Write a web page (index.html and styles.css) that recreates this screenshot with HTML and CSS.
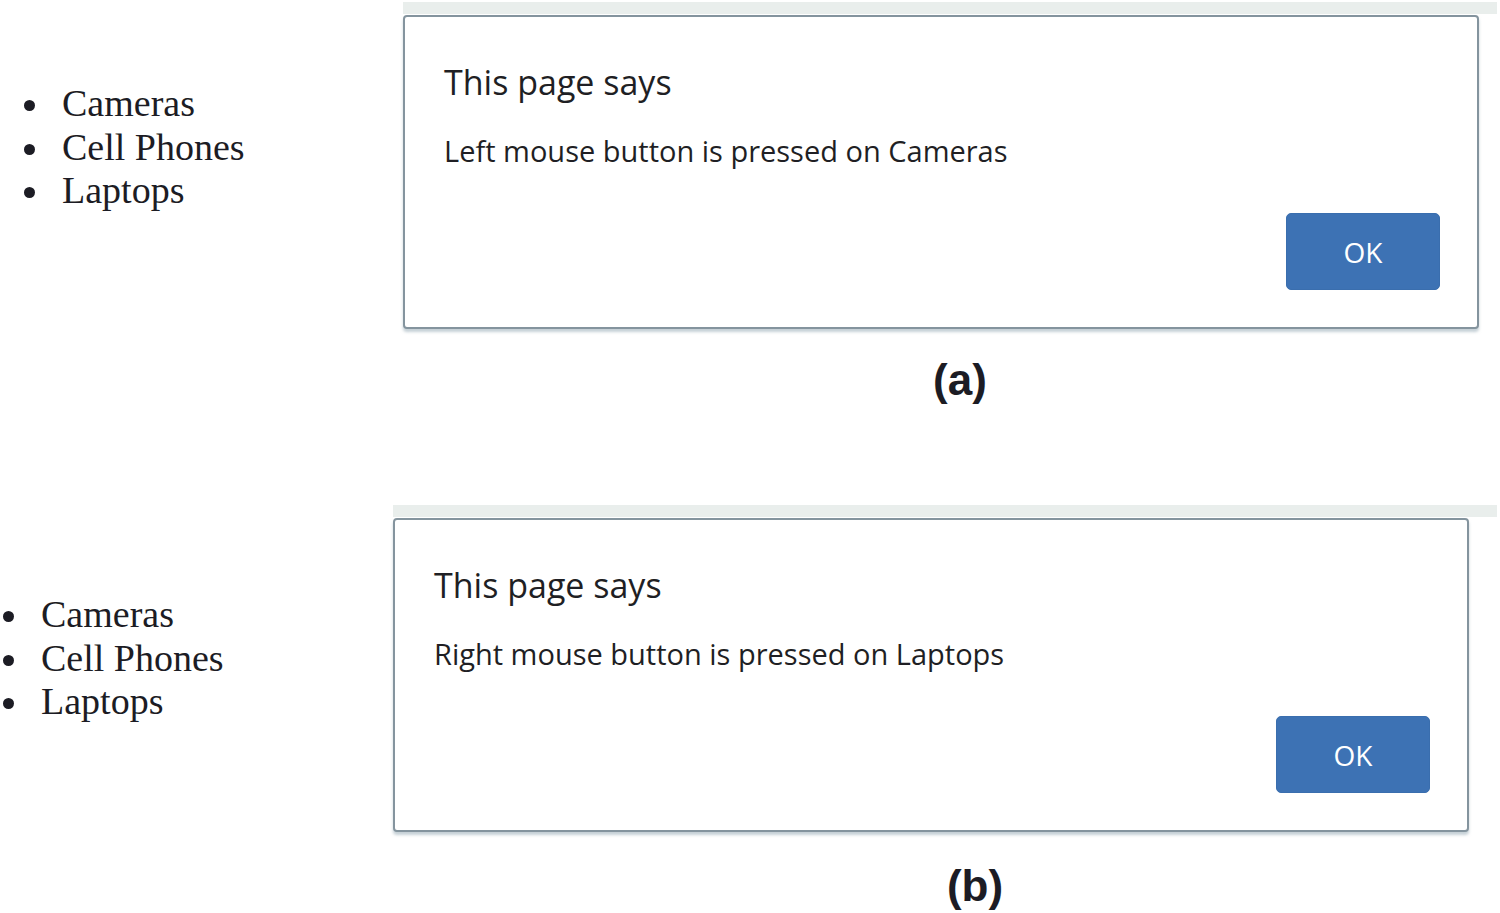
FILE: index.html
```html
<!DOCTYPE html>
<html>
<head>
<meta charset="utf-8">
<link rel="stylesheet" href="styles.css">
</head>
<body>
<section class="panel panel-a">
  <ul class="items">
    <li>Cameras</li>
    <li>Cell Phones</li>
    <li>Laptops</li>
  </ul>
  <div class="dialog-col">
    <div class="strip"></div>
    <div class="dialog">
      <div class="title">This page says</div>
      <div class="message">Left mouse button is pressed on Cameras</div>
      <div class="actions"><button class="ok">OK</button></div>
    </div>
    <div class="caption">(a)</div>
  </div>
</section>
<section class="panel panel-b">
  <ul class="items">
    <li>Cameras</li>
    <li>Cell Phones</li>
    <li>Laptops</li>
  </ul>
  <div class="dialog-col">
    <div class="strip"></div>
    <div class="dialog">
      <div class="title">This page says</div>
      <div class="message">Right mouse button is pressed on Laptops</div>
      <div class="actions"><button class="ok">OK</button></div>
    </div>
    <div class="caption">(b)</div>
  </div>
</section>
</body>
</html>
```
FILE: styles.css
```css
html, body {
  margin: 0;
  padding: 0;
  background: #ffffff;
  width: 1500px;
  height: 913px;
  overflow: hidden;
}

.panel {
  display: flex;
}

.panel-a {
  height: 503px;
}

.items {
  box-sizing: border-box;
  flex: none;
  margin: 0;
  font-family: "Liberation Serif", "Times New Roman", serif;
  font-size: 38px;
  line-height: 43.5px;
  color: #1c1c24;
  list-style: disc;
}

.items li {
  padding-left: 9px;
}

.panel-a .items {
  width: 403px;
  padding: 82px 0 0 53px;
}

.panel-b .items {
  width: 393px;
  padding: 90px 0 0 32px;
}

.dialog-col {
  flex: 1;
  display: flex;
  flex-direction: column;
}

.strip {
  height: 12px;
  margin-top: 2px;
  background: #e9eeec;
  margin-right: 3px;
}

.dialog {
  box-sizing: border-box;
  width: 1076px;
  height: 314px;
  margin-top: 1px;
  border: 2px solid #84949e;
  border-radius: 4px;
  box-shadow: 0 3px 3px rgba(150, 170, 180, 0.55);
  background: #ffffff;
  padding: 45px 37px 0 39px;
  display: flex;
  flex-direction: column;
  font-family: "Open Sans", "Noto Sans", sans-serif;
  color: #1f1f24;
}

.title {
  font-size: 34px;
  line-height: 40px;
}

.message {
  margin-top: 32px;
  font-size: 29px;
  line-height: 34px;
}

.actions {
  display: flex;
  justify-content: flex-end;
  margin-top: 45px;
}

.ok {
  width: 154px;
  height: 77px;
  border: 1px solid #3a6eae;
  border-radius: 5px;
  background: #3d72b4;
  color: #ffffff;
  font-family: "Open Sans", "Noto Sans", sans-serif;
  font-size: 28px;
  font-weight: 500;
  padding: 0;
}

.caption {
  font-family: "Liberation Sans", Arial, sans-serif;
  font-weight: bold;
  font-size: 44px;
  line-height: 50px;
  color: #1c1c24;
  text-align: center;
  margin-top: 26px;
}

.panel-a .caption {
  padding-left: 17px;
}

.panel-b .caption {
  padding-left: 57px;
  margin-top: 29px;
}
```
